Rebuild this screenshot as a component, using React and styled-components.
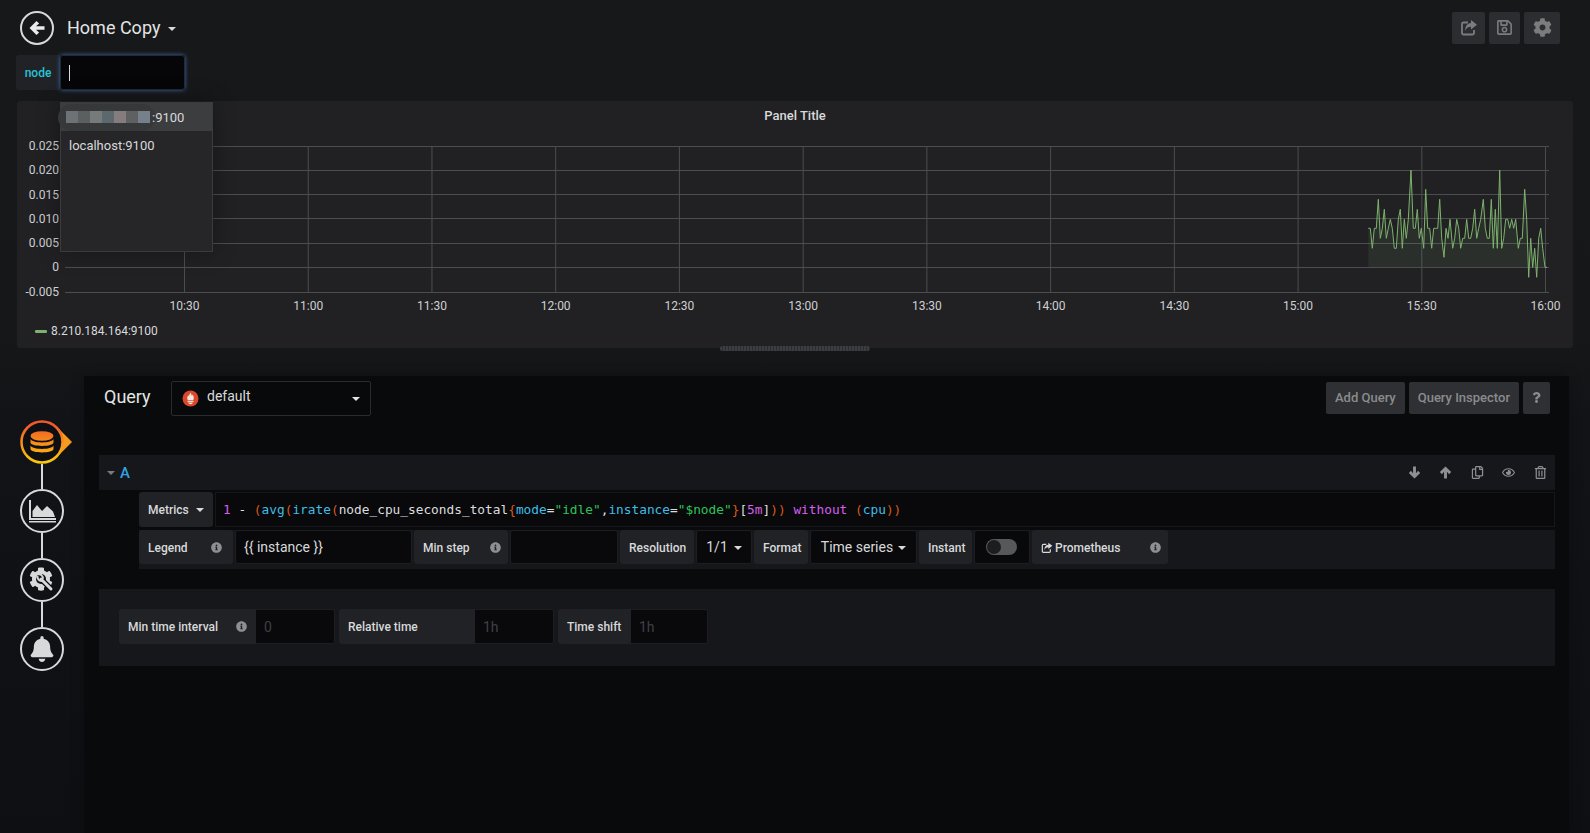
import React from 'react';
import styled, { createGlobalStyle } from 'styled-components';
import { FaCog, FaInfoCircle, FaRegEye, FaRegTrashAlt, FaRegCopy, FaRegSave, FaBell, FaQuestion } from 'react-icons/fa';

const Global = createGlobalStyle`
  html, body { margin: 0; padding: 0; background: #141619; }
  * { box-sizing: border-box; }
`;

const Page = styled.div`
  width: 1590px; height: 833px; overflow: hidden; position: relative;
  background: linear-gradient(180deg, #17181a 0, #161719 340px, #111316 420px, #0e0f12 833px);
  font-family: Roboto, "Liberation Sans", sans-serif; color: #d8d9da;
`;
const Header = styled.header`
  height: 55px; display: flex; align-items: center; padding: 0 30px 0 20px;
`;
const BackCircle = styled.div`
  width: 34px; height: 34px; border-radius: 50%; border: 2px solid #d8d9da;
  display: flex; align-items: center; justify-content: center; color: #e9eaea;
`;
const Title = styled.h1`
  margin: 0 0 0 13px; font-size: 18px; line-height: 24px; font-weight: 400; color: #e3e4e4;
`;
const Caret = styled.span`
  display: inline-block; width: 0; height: 0; flex: none;
  margin-left: ${p => p.$ml ?? 6}px; margin-top: ${p => p.$mt ?? 1}px;
  border-left: 4px solid transparent; border-right: 4px solid transparent;
  border-top: 4px solid ${p => p.$color || '#d8d9da'};
`;
const HeaderTools = styled.div`margin-left: auto; display: flex; gap: 4px;`;
const ToolButton = styled.button`
  width: ${p => p.$w}px; height: 32px; border: 0; border-radius: 2px; padding: 0; background: #2c2d30;
  color: #7b7c7e; font-size: ${p => p.$size || 17}px; display: flex; align-items: center; justify-content: center;
`;

const VarRow = styled.div`display: flex; padding-left: 16px; height: 35px; position: relative; z-index: 3;`;
const VarLabel = styled.div`
  width: 44px; background: #202226; color: #27c3d6; font-size: 12px; font-weight: 500; border-radius: 3px 0 0 3px;
  display: flex; align-items: center; justify-content: center;
`;
const VarInput = styled.div`
  width: 125px; background: #060608; border-radius: 3px; box-shadow: 0 0 4px #3f6aa8, inset 0 0 0 1px #1f2a3a;
  display: flex; align-items: center; padding-left: 9px;
`;
const TextCursor = styled.span`width: 1px; height: 16px; background: #d8d9da;`;
const Dropdown = styled.div`
  position: absolute; left: 60px; top: 47px; width: 153px; height: 150px; background: #262628;
  border: 1px solid #3a3b3d; box-shadow: 0 0 20px rgba(0,0,0,.35); font-size: 13px; color: #d8d9da;
`;
const DropRow = styled.div`
  height: 28px; display: flex; align-items: center; padding-left: ${p => p.$active ? 5 : 8}px;
  background: ${p => p.$active ? '#3c3d3f' : 'transparent'}; position: relative;
`;
const Smudge = styled.div`
  position: absolute; left: -3px; top: 1px; width: 97px; height: 27px; border-radius: 14px; background: #37383a;
`;
const Mosaic = styled.span`display: flex; position: relative; margin-right: 2px;`;
const MosaicCell = styled.span`width: 12px; height: 12px; background: ${p => p.$c}; display: block;`;
const RowText = styled.span`position: relative;`;

const Panel = styled.section`
  margin: 11px 17px 0; height: 247px; background: #212124; border-radius: 3px; position: relative;
`;
const PanelTitle = styled.div`
  height: 35px; padding-top: 6px; line-height: 18px; text-align: center; font-size: 13px; font-weight: 500; color: #d8d9da;
`;
const Chart = styled.svg`display: block;`;
const AxisText = styled.text`font-family: Roboto, "Liberation Sans", sans-serif; font-size: 12px; fill: #cfd0d1;`;
const Legend = styled.div`
  display: flex; align-items: center; height: 30px; padding-left: 18px; font-size: 12px; color: #d8d9da;
`;
const LegendSwatch = styled.span`width: 12px; height: 3px; border-radius: 1px; background: #7eb26d; margin-right: 4px;`;
const SplitHandle = styled.div`
  position: absolute; left: 703px; bottom: -3px; width: 150px; height: 5px; border-radius: 3px;
  background: repeating-linear-gradient(90deg, #3c3d40 0, #3c3d40 2px, #2c2d30 2px, #2c2d30 3px);
`;

const Editor = styled.div`display: flex; margin-top: 28px; height: 457px;`;
const Side = styled.nav`width: 84px; padding: 44px 0 0 20px; display: flex; flex-direction: column;`;
const StepCircle = styled.div`
  width: 44px; height: 44px; border-radius: 50%; border: 2px solid #d8d9da; flex: none;
  display: flex; align-items: center; justify-content: center; color: #d8d9da; font-size: 26px; position: relative;
`;
const StepLine = styled.div`width: 2px; height: 25px; background: #d8d9da; margin-left: 21px; flex: none;`;
const ActiveStep = styled.svg`display: block; flex: none;`;

const Content = styled.main`
  width: 1485px; background: #090a0c; padding: 5px 14px 0 15px; box-shadow: 0 0 12px rgba(0,0,0,.25);
`;
const TopBar = styled.div`display: flex; align-items: center; height: 35px;`;
const Heading = styled.h2`margin: -4px 20px 0 5px; font-size: 18px; font-weight: 400; color: #e3e4e4; width: 47px;`;
const DsSelect = styled.div`
  width: 200px; height: 35px; border: 1px solid #2a2b2e; border-radius: 2px; display: flex; align-items: center;
  padding: 0 10px; font-size: 14px; color: #d8d9da; gap: 8px; background: #08090b;
`;
const DsName = styled.span`flex: 1; margin-top: -5px;`;
const TopActions = styled.div`margin: -2px 5px 0 auto; display: flex; gap: 4px;`;
const GrayButton = styled.button`
  height: 32px; padding: 0 ${p => p.$px || 9}px; border: 0; border-radius: 2px; background: #2f3033; color: #8a8b8d;
  font: 500 13px Roboto, "Liberation Sans", sans-serif; display: flex; align-items: center;
`;
const QueryHead = styled.div`
  margin-top: 39px; height: 35px; background: #15171a; display: flex; align-items: center; padding-left: 8px;
`;
const QueryLetter = styled.span`margin-left: 5px; color: #33a2e5; font-size: 15px; font-weight: 500;`;
const QueryTools = styled.div`margin-left: auto; display: flex; align-items: center; gap: 2.6px; color: #8e8f91; font-size: 13px;`;
const ToolSlot = styled.span`width: 29px; display: flex; justify-content: center;`;
const QueryBody = styled.div`padding-left: 40px;`;
const FormRow = styled.div`display: flex; gap: 2px; margin-top: 2px;`;
const Label = styled.div`
  width: ${p => p.$w}px; height: ${p => p.$h || 34}px; background: #202226; border-radius: 3px; padding: 0 ${p => p.$pr ?? 9}px 0 9px; flex: none;
  display: flex; align-items: center; justify-content: space-between; color: #d8d9da; font-size: 12px; font-weight: 500;
  white-space: nowrap;
`;
const FormBand = styled(FormRow)`
  background: #15171a; height: 39px; margin-top: 3px;
  ${Label} { padding-top: 1px; }
`;
const Field = styled.div`
  width: ${p => p.$w}px; height: 34px; background: #09090b; border: 1px solid #1c1e21; border-radius: 3px; flex: none;
  display: flex; align-items: center; padding: 0 ${p => p.$px || 8}px; font-size: 14px; color: #d8d9da;
  justify-content: ${p => p.$center ? 'center' : 'flex-start'};
`;
const Info = styled.span`color: #8e8f91; font-size: 11px; display: flex;`;
const CodeField = styled.div`
  flex: 1; height: 35px; background: #09090b; border: 1px solid #15171a; padding-left: 7px;
  white-space: pre; font: 12.8px/34px "DejaVu Sans Mono", "Liberation Mono", monospace; color: #dcdddf;
`;
const Tok = styled.span`color: ${p => p.$c};`;
const Toggle = styled.div`
  width: 31px; height: 16px; border-radius: 8px; background: #56585a; position: relative; margin-right: 1px;
`;
const Knob = styled.span`
  position: absolute; left: 1px; top: 1px; width: 14px; height: 14px; border-radius: 50%; background: #1c1d1f;
`;
const PromLabel = styled.span`display: flex; align-items: center; gap: 2px;`;
const Options = styled.div`
  margin-top: 20px; height: 77px; background: #15171a; padding: 20px 21px 0 20px; display: flex; gap: 4px;
`;
const OptGroup = styled.div`display: flex;`;
const OptLabel = styled(Label)`height: 35px; border-radius: 3px 0 0 3px;`;
const OptField = styled(Field)`height: 35px; color: #3e4145; border-radius: 0 3px 3px 0; border-left: 0;`;
const ArrowSvg = styled.svg`display: block; transform: rotate(${p => p.$rot || 0}deg);`;

const raw = [[205,295],[211,295],[217,355],[223,295],[229,295],[235,208],[241,325],[247,295],[253,238],[259,325],[265,295],[271,268],[277,295],[283,355],[289,355],[295,268],[301,238],[307,355],[313,268],[319,325],[325,268],[333,120],[340,295],[346,295],[352,238],[358,325],[364,295],[371,355],[377,178],[383,295],[389,295],[395,355],[401,295],[407,295],[413,295],[419,208],[425,325],[432,382],[438,295],[444,325],[450,268],[458,355],[464,325],[470,268],[476,295],[482,355],[488,325],[494,325],[500,268],[506,325],[512,325],[518,295],[524,238],[530,325],[536,295],[542,268],[550,208],[556,295],[562,325],[568,325],[574,208],[580,355],[586,238],[592,355],[599,120],[605,355],[611,325],[617,268],[623,268],[629,295],[635,268],[641,295],[647,268],[655,355],[661,325],[667,325],[674,178],[680,268],[686,442],[692,325],[698,412],[704,355],[710,442],[716,325],[722,295],[728,355],[735,412],[741,412]];
const pts = raw.map(([x, y]) => [1300 + x / 3, 130 + y / 3]);
const line = pts.map(p => `${p[0].toFixed(1)},${p[1].toFixed(1)}`).join(' ');
const area = `M${pts[0][0]},267 L${line} L${pts[pts.length - 1][0]},267 Z`;
const yTicks = [['0.025', 146, 150], ['0.020', 170, 174], ['0.015', 194, 199], ['0.010', 218, 223], ['0.005', 243, 247], ['0', 267, 271], ['-0.005', 292, 296]];
const xTicks = ['10:30','11:00','11:30','12:00','12:30','13:00','13:30','14:00','14:30','15:00','15:30','16:00'];
const mosaic = ['#6e7276', '#5c5f62', '#777a7a', '#5b686d', '#857d7d', '#5e6062', '#76808a'];

const ORANGE = '#d9581c', CYAN = '#3fbde6', GREEN = '#2dc35a', PINK = '#d65ff0';

function Graph() {
  return (
    <Chart width="1556" height="180" viewBox="17 136 1556 180">
      {yTicks.map(([t, y, ty]) => (
        <g key={t}>
          <line x1="65" x2="1549" y1={y + .5} y2={y + .5} stroke="#4c4d4f" />
          <AxisText x="59" y={ty} textAnchor="end">{t}</AxisText>
        </g>
      ))}
      {xTicks.map((t, i) => {
        const x = 184.5 + i * 123.73;
        return (
          <g key={t}>
            <line x1={x} x2={x} y1="146" y2="292" stroke="#4c4d4f" />
            <AxisText x={x} y="310" textAnchor="middle">{t}</AxisText>
          </g>
        );
      })}
      <path d={area} fill="#7eb26d" fillOpacity=".1" />
      <polyline points={line} fill="none" stroke="#7eb26d" strokeWidth="1" />
    </Chart>
  );
}

function BoldArrow({ size = 16, rot = 0 }) {
  return (
    <ArrowSvg $rot={rot} width={size} height={size} viewBox="0 0 16 16" fill="currentColor">
      <path d="M.5 8 7.500 1l2.600 2.600L7 6.200h8.500v3.600H7l3.100 2.600L7.500 15z" />
    </ArrowSvg>
  );
}

function ShareIcon({ size = 18 }) {
  return (
    <svg width={size} height={size} viewBox="0 0 18 18" fill="none" stroke="currentColor">
      <path d="M8 3.500H3.500A1.500 1.500 0 0 0 2 5v9a1.500 1.500 0 0 0 1.500 1.500h9A1.500 1.500 0 0 0 14 14v-3" strokeWidth="1.800" />
      <path d="M11 1l6 4.800-6 4.800V7.700C8 7.700 6 9 5.500 12 4.800 8 7 4.300 11 4z" fill="currentColor" stroke="none" />
    </svg>
  );
}

function PromIcon() {
  return (
    <svg width="17" height="17" viewBox="0 0 17 17" style={{ flex: 'none' }}>
      <circle cx="8.5" cy="8.5" r="8" fill="#d9482a" />
      <path d="M8.500 2.600c.4 1.600 1.400 2 1.200 3.300.6-.3.9-.9.900-1.300 1.200 1.400 1.600 3.600.7 5.500H5.700C4.900 8.400 5.300 6.500 6.300 5c.1.7.3 1.100.8 1.400C6.900 5 7.900 4 8.500 2.600z" fill="#f3e4de" />
      <rect x="5.500" y="10.700" width="6" height="1.200" fill="#f3e4de" />
      <path d="M6.200 12.500h4.600c-.2 1.100-1.200 1.700-2.300 1.700s-2.100-.6-2.300-1.700z" fill="#f3e4de" />
    </svg>
  );
}

function ChartIcon() {
  return (
    <svg width="28" height="24" viewBox="0 0 28 24" fill="#d8d9da">
      <path d="M1 1h2v18h25v2H1z M1 22h27v1.500H1z" />
      <path d="M4.500 18V12L9 6l5 6 5-5 6 5.500 2 5.500z" />
    </svg>
  );
}

function PrefsIcon() {
  return (
    <svg width="30" height="30" viewBox="0 0 30 30">
      <g transform="translate(2 2)">
        <FaCog size={24} color="#d8d9da" />
      </g>
      <circle cx="14" cy="14" r="5" fill="#0e0f12" />
      <line x1="14" y1="14" x2="24" y2="24" stroke="#0e0f12" strokeWidth="5.500" strokeLinecap="round" />
      <line x1="14" y1="14" x2="24" y2="24" stroke="#d8d9da" strokeWidth="3" strokeLinecap="round" />
      <path d="M10.500 11A3.800 3.800 0 0 0 15.500 15.500" stroke="#d8d9da" strokeWidth="2.200" fill="none" />
      <path d="M11 9.500A3.800 3.800 0 0 1 15.800 14" stroke="#d8d9da" strokeWidth="2" fill="none" />
    </svg>
  );
}

function ActiveIcon() {
  return (
    <ActiveStep width="56" height="44" viewBox="0 0 56 44">
      <defs>
        <linearGradient id="act" gradientUnits="userSpaceOnUse" x1="0" y1="4" x2="0" y2="42">
          <stop offset="0" stopColor="#f0582a" />
          <stop offset="1" stopColor="#fbc70c" />
        </linearGradient>
        <linearGradient id="act2" gradientUnits="userSpaceOnUse" x1="0" y1="11" x2="0" y2="34">
          <stop offset="0" stopColor="#f36a23" />
          <stop offset="1" stopColor="#fab015" />
        </linearGradient>
      </defs>
      <path d="M36 6L52 22 36 38Z" fill="#f79a1f" />
      <circle cx="22" cy="22" r="20.500" fill="#0e0f12" stroke="url(#act)" strokeWidth="2.500" />
      <g fill="url(#act2)">
        <ellipse cx="22" cy="16" rx="11.500" ry="4.800" />
        <path d="M10.500 19C12 23.500 32 23.500 33.500 19V22.500C33.500 27 10.500 27 10.500 22.500Z" />
        <path d="M10.500 25.500C12 30 32 30 33.500 25.500V29C33.500 33.500 10.500 33.500 10.500 29Z" />
      </g>
    </ActiveStep>
  );
}

export default function App() {
  return (
    <Page>
      <Global />
      <Header>
        <BackCircle><BoldArrow /></BackCircle>
        <Title>Home Copy</Title>
        <Caret $ml={8} $mt={3} />
        <HeaderTools>
          <ToolButton $w={33}><ShareIcon /></ToolButton>
          <ToolButton $w={31}><FaRegSave /></ToolButton>
          <ToolButton $w={36} $size={19}><FaCog /></ToolButton>
        </HeaderTools>
      </Header>
      <VarRow>
        <VarLabel>node</VarLabel>
        <VarInput><TextCursor /></VarInput>
        <Dropdown>
          <DropRow $active>
            <Smudge />
            <Mosaic>{mosaic.map((c, i) => <MosaicCell key={i} $c={c} />)}</Mosaic>
            <RowText>:9100</RowText>
          </DropRow>
          <DropRow>localhost:9100</DropRow>
        </Dropdown>
      </VarRow>
      <Panel>
        <PanelTitle>Panel Title</PanelTitle>
        <Graph />
        <Legend><LegendSwatch />8.210.184.164:9100</Legend>
        <SplitHandle />
      </Panel>
      <Editor>
        <Side>
          <ActiveIcon />
          <StepLine />
          <StepCircle><ChartIcon /></StepCircle>
          <StepLine />
          <StepCircle><PrefsIcon /></StepCircle>
          <StepLine />
          <StepCircle><FaBell /></StepCircle>
        </Side>
        <Content>
          <TopBar>
            <Heading>Query</Heading>
            <DsSelect>
              <PromIcon />
              <DsName>default</DsName>
              <Caret $ml={0} $mt={1} $color="#e3e4e4" />
            </DsSelect>
            <TopActions>
              <GrayButton>Add Query</GrayButton>
              <GrayButton>Query Inspector</GrayButton>
              <GrayButton $px={8}><FaQuestion size={11} /></GrayButton>
            </TopActions>
          </TopBar>
          <QueryHead>
            <Caret $ml={0} $mt={1} $color="#7b7c7e" />
            <QueryLetter>A</QueryLetter>
            <QueryTools>
              <ToolSlot><BoldArrow size={13} rot={-90} /></ToolSlot>
              <ToolSlot><BoldArrow size={13} rot={90} /></ToolSlot>
              <ToolSlot><FaRegCopy /></ToolSlot>
              <ToolSlot><FaRegEye /></ToolSlot>
              <ToolSlot><FaRegTrashAlt /></ToolSlot>
            </QueryTools>
          </QueryHead>
          <QueryBody>
            <FormRow>
              <Label $w={74} $h={35}>Metrics<Caret $ml={0} $color="#d8d9da" /></Label>
              <CodeField>
                <Tok $c={PINK}>1</Tok>{' - '}<Tok $c={ORANGE}>(</Tok><Tok $c={CYAN}>avg</Tok><Tok $c={ORANGE}>(</Tok><Tok $c={CYAN}>irate</Tok><Tok $c={ORANGE}>(</Tok>node_cpu_seconds_total<Tok $c={ORANGE}>{'{'}</Tok><Tok $c={CYAN}>mode</Tok>=<Tok $c={GREEN}>"idle"</Tok>,<Tok $c={CYAN}>instance</Tok>=<Tok $c={GREEN}>"$node"</Tok><Tok $c={ORANGE}>{'}'}</Tok>[<Tok $c={PINK}>5m</Tok>]<Tok $c={ORANGE}>))</Tok>{' '}<Tok $c={PINK}>without</Tok>{' '}<Tok $c={ORANGE}>(</Tok><Tok $c={CYAN}>cpu</Tok><Tok $c={ORANGE}>))</Tok>
              </CodeField>
            </FormRow>
            <FormBand>
              <Label $w={94} $pr={11}>Legend<Info><FaInfoCircle /></Info></Label>
              <Field $w={177}>{'{{ instance }}'}</Field>
              <Label $w={94} $pr={7}>Min step<Info><FaInfoCircle /></Info></Label>
              <Field $w={108} />
              <Label $w={74}>Resolution</Label>
              <Field $w={56} $center $px={4}>1/1<Caret $ml={6} /></Field>
              <Label $w={54}>Format</Label>
              <Field $w={107} $center $px={4}>Time series<Caret $ml={5} /></Field>
              <Label $w={53} $pr={4}>Instant</Label>
              <Field $w={56} $center><Toggle><Knob /></Toggle></Field>
              <Label $w={136} $pr={7}>
                <PromLabel><ShareIcon size={12} />Prometheus</PromLabel>
                <Info><FaInfoCircle /></Info>
              </Label>
            </FormBand>
          </QueryBody>
          <Options>
            <OptGroup>
              <OptLabel $w={137}>Min time interval<Info><FaInfoCircle /></Info></OptLabel>
              <OptField $w={79}>0</OptField>
            </OptGroup>
            <OptGroup>
              <OptLabel $w={136}>Relative time</OptLabel>
              <OptField $w={79}>1h</OptField>
            </OptGroup>
            <OptGroup>
              <OptLabel $w={73} $pr={4}>Time shift</OptLabel>
              <OptField $w={77}>1h</OptField>
            </OptGroup>
          </Options>
        </Content>
      </Editor>
    </Page>
  );
}
